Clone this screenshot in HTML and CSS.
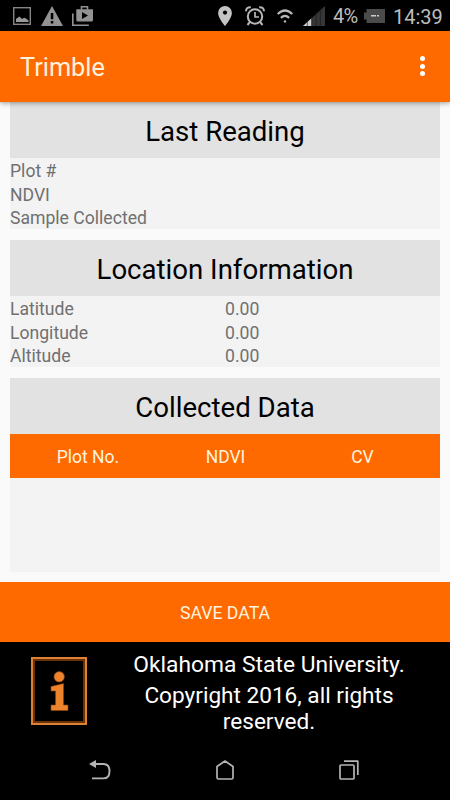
FILE: index.html
```html
<!DOCTYPE html>
<html lang="en">
<head>
    <meta charset="UTF-8">
    <meta name="viewport" content="width=device-width, initial-scale=1.0">
    <title>Trimble</title>
    <link rel="stylesheet" href="styles.css">
</head>
<body>

    <!-- Status bar -->
    <div class="status">
        <div class="status__left">
            <svg width="18" height="18" viewBox="0 0 18 18">
                <rect x="0.7" y="0.7" width="16.6" height="16.6" fill="none" stroke="#858585" stroke-width="1.4"/>
                <path d="M3 15v-3l3.500-2.500 2.500 2.500 2-1.200 2 .6 2.500 2V15z" fill="#999"/>
            </svg>
            <svg class="status__warn" width="22" height="20" viewBox="0 0 22 20">
                <path d="M11 0L22 20H0z" fill="#939393"/>
                <path d="M9.8 7h2.5v6.2H9.8zM9.8 15h2.5v2.4H9.8z" fill="#000"/>
            </svg>
            <svg class="status__store" width="21" height="20" viewBox="0 0 21 20">
                <path d="M9.5 3.5V.8h6v2.7M.8 7.5v11.7h16" fill="none" stroke="#939393" stroke-width="1.6"/>
                <path d="M4.3 3.3H21V14q0 1.5-1.5 1.5h-13.7q-1.5 0-1.5-1.5z" fill="#939393"/>
                <path d="M10 6l6 3.5-6 3.5z" fill="#000"/>
            </svg>
        </div>
        <div class="status__right">
            <svg width="14" height="20" viewBox="0 0 14 20">
                <path d="M7 0a6.9 6.9 0 0 0-6.9 7C.1 12 7 20 7 20s6.9-8 6.9-13A6.9 6.9 0 0 0 7 0z" fill="#c4c4c4"/>
                <circle cx="7" cy="6.6" r="2.1" fill="#000"/>
            </svg>
            <svg class="status__alarm" width="20" height="20" viewBox="0 0 20 20" fill="none" stroke="#b8b8b8">
                <circle cx="10" cy="10.5" r="7.2" stroke-width="2"/>
                <path d="M10 6v5h4" stroke-width="1.7"/>
                <path d="M1 5.2C1 2.5 3 .9 5.8 1.2M19 5.2C19 2.5 17 .9 14.2 1.2" stroke-width="2"/>
                <path d="M4.8 16.2L2.5 19M15.2 16.2l2.3 2.8" stroke-width="2"/>
            </svg>
            <svg class="status__wifi" width="16" height="14" viewBox="0 0 16 14" fill="none" stroke="#b8b8b8" stroke-width="2.2">
                <path d="M.7 5Q8-2 15.300 5M3.900 8.900Q8 5 12.100 8.900"/>
                <circle cx="8" cy="12.4" r="1.2" fill="#b8b8b8" stroke="none"/>
            </svg>
            <svg class="status__signal" width="22" height="20" viewBox="0 0 22 20">
                <path d="M0 20L22 0v20z" fill="#363636"/>
                <path d="M0 20l8.5-7.700V20z" fill="#d0d0d0"/>
                <path d="M4.3 14v6M8.700 10v10M13 6v14M17.4 2v18" stroke="#151515" stroke-width=".6"/>
            </svg>
            <span class="status__percent">4%</span>
            <svg class="status__battery" width="21" height="14" viewBox="0 0 21 14">
                <path d="M2.5 0H21v14H2.500v-3.500H0v-7h2.500z" fill="#4b4b4b"/>
                <path d="M7 6.700h5M13 6.700h2" stroke="#ccc" stroke-width="1.5"/>
            </svg>
            <span class="status__time">14:39</span>
        </div>
    </div>

    <!-- App bar -->
    <div class="appbar">
        <h1 class="appbar__title">Trimble</h1>
        <div class="menu">
            <span class="menu__dot"></span>
            <span class="menu__dot"></span>
            <span class="menu__dot"></span>
        </div>
    </div>

    <div class="content">
        <div class="card">
            <h2 class="card__title">Last Reading</h2>
            <div class="row"><span>Plot #</span></div>
            <div class="row"><span>NDVI</span></div>
            <div class="row"><span>Sample Collected</span></div>
        </div>

        <div class="card">
            <h2 class="card__title">Location Information</h2>
            <div class="row"><span>Latitude</span><span>0.00</span></div>
            <div class="row"><span>Longitude</span><span>0.00</span></div>
            <div class="row"><span>Altitude</span><span>0.00</span></div>
        </div>

        <div class="card card--data">
            <h2 class="card__title">Collected Data</h2>
            <div class="columns">
                <span>Plot No.</span>
                <span>NDVI</span>
                <span>CV</span>
            </div>
        </div>
    </div>

    <button class="save">SAVE DATA</button>

    <div class="footer">
        <svg class="footer__icon" width="56" height="68" viewBox="0 0 56 68">
            <rect x="2" y="2" width="52" height="64" fill="none" stroke="#6b3206" stroke-width="4"/>
            <rect x="1" y="1" width="54" height="66" fill="none" stroke="#dc8237" stroke-width="2"/>
            <g fill="#ed832d" stroke="#8a4510" stroke-width=".6">
                <circle cx="28.2" cy="19.8" r="5.2"/>
                <path d="M20 29.5l12.500-3V48H37v5.500H20V48h4.500V34H20z"/>
            </g>
        </svg>
        <div class="footer__text">
            <p class="footer__name">Oklahoma State University.</p>
            <p class="footer__copy">Copyright 2016, all rights<br>reserved.</p>
        </div>
    </div>

    <!-- Navigation buttons -->
    <div class="nav">
        <svg width="22" height="20" viewBox="0 0 22 20">
            <path d="M6 4h8.500q6 0 6 7.200t-6 7.200H3" fill="none" stroke="#b4b4b4" stroke-width="1.9"/>
            <path d="M0 4l7-4v8z" fill="#b4b4b4"/>
        </svg>
        <svg width="18" height="20" viewBox="0 0 18 20" fill="none" stroke="#b4b4b4" stroke-width="1.7" stroke-linejoin="round">
            <path d="M1 6.500L9 1l8 5.500v11q0 1.500-1.500 1.500h-13Q1 19 1 17.500z"/>
        </svg>
        <svg width="20" height="20" viewBox="0 0 20 20" fill="none" stroke="#b4b4b4" stroke-width="1.7" stroke-linejoin="round">
            <rect x="1" y="5" width="14" height="14" rx="1"/>
            <path d="M5 1.200h13.800V15"/>
        </svg>
    </div>

</body>
</html>
```
FILE: styles.css
```css
* {
    box-sizing: border-box;
}

body {
    margin: 0;
    width: 450px;
    height: 800px;
    overflow: hidden;
    display: flex;
    flex-direction: column;
    font-family: Roboto, sans-serif;
    background-color: #fafafa;
}

h1, h2, p {
    margin: 0;
    font-weight: 400;
}

svg {
    display: block;
    flex: none;
}

.status {
    height: 31px;
    flex: none;
    display: flex;
    justify-content: space-between;
    align-items: center;
    padding: 0 8px 0 13px;
    background-color: #000;
    color: #bdbdbd;
}

.status__left,
.status__right {
    display: flex;
    align-items: center;
}

.status__warn {
    margin-left: 10px;
}

.status__store {
    margin-left: 9px;
}

.status__alarm {
    margin-left: 13px;
}

.status__wifi {
    margin-left: 12px;
}

.status__signal {
    margin-left: 10px;
}

.status__percent {
    width: 26px;
    margin-left: 8px;
    padding-top: 1px;
    font-size: 20px;
    letter-spacing: -0.8px;
}

.status__battery {
    margin-left: 5px;
}

.status__time {
    width: 49px;
    margin-left: 8px;
    padding-top: 2px;
    font-size: 20px;
}

.appbar {
    height: 71px;
    flex: none;
    display: flex;
    justify-content: space-between;
    align-items: center;
    padding: 2px 25px 0 20px;
    background-color: #ff6a00;
    box-shadow: 0 1px 5px rgba(0, 0, 0, 0.4);
    z-index: 1;
}

.appbar__title {
    font-size: 25.3px;
    color: #fff3df;
}

.menu {
    display: flex;
    flex-direction: column;
    gap: 2.5px;
    padding-bottom: 3px;
}

.menu__dot {
    width: 5px;
    height: 5px;
    border-radius: 50%;
    background-color: #fff;
}

.content {
    height: 480px;
    flex: none;
    display: flex;
    flex-direction: column;
    gap: 11px;
    padding: 0 10px 10px;
}

.card {
    height: 127px;
    background-color: #f3f3f3;
}

.card--data {
    height: 194px;
}

.card__title {
    height: 56px;
    margin-bottom: 1px;
    line-height: 59px;
    text-align: center;
    font-size: 27.6px;
    color: #000;
    background-color: #e2e2e2;
}

.card--data .card__title {
    margin-bottom: 0;
}

.row {
    display: grid;
    grid-template-columns: 1fr 1fr;
    line-height: 23.7px;
    font-size: 17.6px;
    color: #707070;
}

.row:nth-child(2) {
    padding-top: 1px;
}

.columns {
    height: 44px;
    display: grid;
    grid-template-columns: 156px 119px 1fr;
    align-items: center;
    padding-top: 1px;
    text-align: center;
    font-size: 17.5px;
    color: #fff3df;
    background-color: #ff6a00;
}

.save {
    height: 60px;
    flex: none;
    border: none;
    padding: 2px 0 0;
    font-family: inherit;
    font-size: 17.7px;
    color: #fff3df;
    background-color: #ff6a00;
}

.footer {
    height: 98px;
    flex: none;
    display: flex;
    padding: 0 31px;
    background-color: #000;
    color: #fff;
}

.footer__icon {
    margin-top: 15px;
}

.footer__text {
    width: 300px;
    margin-left: 32px;
    padding-top: 10px;
    text-align: center;
    font-size: 22.8px;
    line-height: 26px;
}

.footer__copy {
    margin-top: 5px;
    font-size: 22.6px;
}

.nav {
    height: 60px;
    flex: none;
    display: flex;
    justify-content: space-between;
    align-items: center;
    padding: 0 91px 0 89px;
    background-color: #000;
}
```
